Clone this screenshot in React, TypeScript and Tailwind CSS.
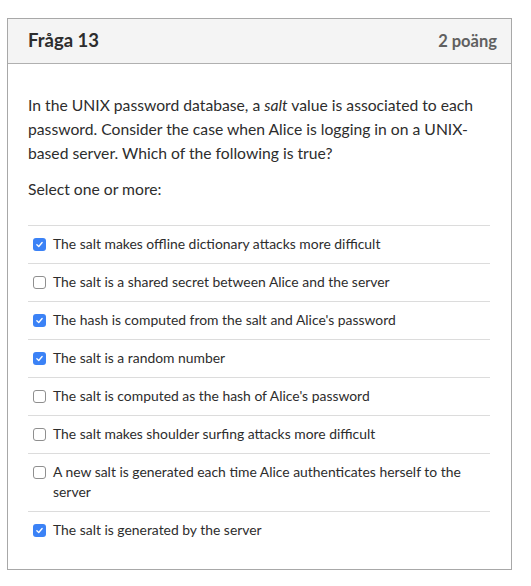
import React from "react";

const options: { text: string; checked: boolean }[] = [
  { text: "The salt makes offline dictionary attacks more difficult", checked: true },
  { text: "The salt is a shared secret between Alice and the server", checked: false },
  { text: "The hash is computed from the salt and Alice's password", checked: true },
  { text: "The salt is a random number", checked: true },
  { text: "The salt is computed as the hash of Alice's password", checked: false },
  { text: "The salt makes shoulder surfing attacks more difficult", checked: false },
  { text: "A new salt is generated each time Alice authenticates herself to the server", checked: false },
  { text: "The salt is generated by the server", checked: true },
];

function Box({ checked }: { checked: boolean }) {
  if (checked) {
    return (
      <span className="mt-[4px] flex h-[13px] w-[13px] shrink-0 items-center justify-center rounded-[3px] bg-[#3b82f6]">
        <svg viewBox="0 0 12 12" className="h-[9px] w-[9px]">
          <path d="M2.5 6.3 L5 8.6 L9.5 3.4" fill="none" stroke="white" strokeWidth="1.8" strokeLinecap="round" strokeLinejoin="round" />
        </svg>
      </span>
    );
  }
  return <span className="mt-[4px] h-[13px] w-[13px] shrink-0 rounded-[3px] border border-[#8f8f8f] bg-white" />;
}

export default function App() {
  return (
    <div className="min-h-[586px] bg-white pt-[18px] pl-[7px]" style={{ fontFamily: "Lato, 'Open Sans', sans-serif" }}>
      <div className="w-[505px] border border-[#a8a8a8] bg-white">
        <header className="flex h-[45px] items-center justify-between border-b border-[#b0b0b0] bg-[#f4f4f4] pl-[20px] pr-[14px]">
          <h2 className="text-[18.5px] font-bold text-[#2d2d2d]">Fråga 13</h2>
          <span className="text-[16.5px] font-bold text-[#606060]">2 poäng</span>
        </header>
        <div className="pl-[20px] pr-[21px] pt-[29px] pb-[20px]">
          <p className="text-[15.7px] leading-[24px] text-[#2d2d2d]">
            In the UNIX password database, a <em>salt</em> value is associated to each password. Consider the case when Alice is logging in on a UNIX-based server. Which of the following is true?
          </p>
          <p className="mt-[12px] text-[15.7px] leading-[24px] text-[#2d2d2d]">Select one or more:</p>
          <ul className="mt-[24px]">
            {options.map((o) => (
              <li key={o.text} className="flex gap-[7px] border-t border-[#dcdcdc] pt-[8px] pb-[9px] pl-[5px] pr-[16px] text-[13.9px] leading-[20px] text-[#2d2d2d]">
                <Box checked={o.checked} />
                <span>{o.text}</span>
              </li>
            ))}
          </ul>
        </div>
      </div>
    </div>
  );
}
